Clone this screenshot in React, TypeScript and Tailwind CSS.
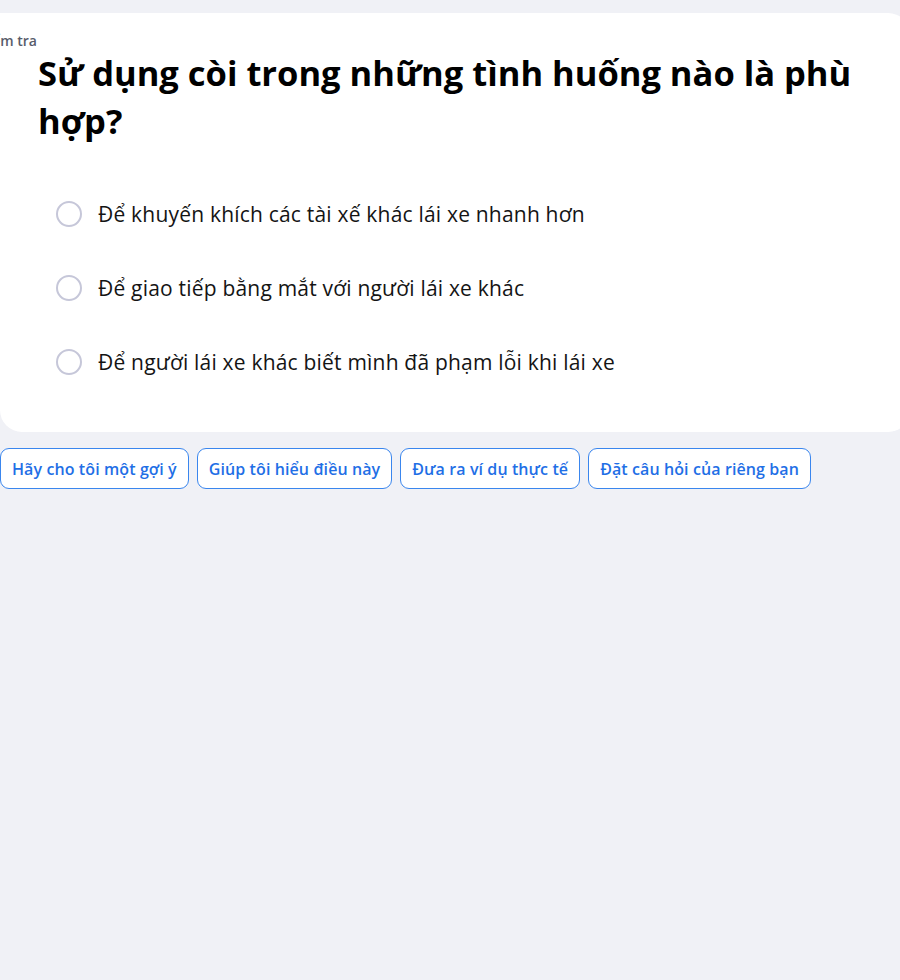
const options = [
  "Để khuyến khích các tài xế khác lái xe nhanh hơn",
  "Để giao tiếp bằng mắt với người lái xe khác",
  "Để người lái xe khác biết mình đã phạm lỗi khi lái xe",
]

const hints = [
  "Hãy cho tôi một gợi ý",
  "Giúp tôi hiểu điều này",
  "Đưa ra ví dụ thực tế",
  "Đặt câu hỏi của riêng bạn",
]

export default function App() {
  return (
    <div className="min-h-[980px] bg-[#f0f1f6] pt-[13px] font-['Open_Sans','Noto_Sans',sans-serif] overflow-hidden">
      <div className="w-[910px] bg-white rounded-bl-[22px] rounded-r-[22px] pt-[19px] pb-[56px]">
        <div className="flex justify-end w-[37px] whitespace-nowrap">
          <span className="text-[14px] leading-[17px] font-semibold text-[#585c6b]">Kiểm tra</span>
        </div>
        <h1 className="ml-[38px] max-w-[835px] text-[34.5px] leading-[48px] font-bold text-black">
          Sử dụng còi trong những tình huống nào là phù hợp?
        </h1>
        <div className="mt-[55px] ml-[56px] flex flex-col gap-[46px]">
          {options.map((o) => (
            <label key={o} className="flex items-center gap-4 h-[28px] cursor-pointer">
              <span className="w-[26px] h-[26px] rounded-full border-2 border-[#c6c7d9] shrink-0" />
              <span className="text-[21px] leading-[28px] tracking-[0.2px] text-[#141414]">{o}</span>
            </label>
          ))}
        </div>
      </div>
      <div className="flex gap-2 mt-4">
        {hints.map((h) => (
          <button
            key={h}
            className="h-[41px] px-[11px] rounded-[9px] border border-[#3a86ee] bg-white text-[16px] tracking-[0.1px] font-semibold text-[#1f6fe6] whitespace-nowrap"
          >
            {h}
          </button>
        ))}
      </div>
    </div>
  )
}
